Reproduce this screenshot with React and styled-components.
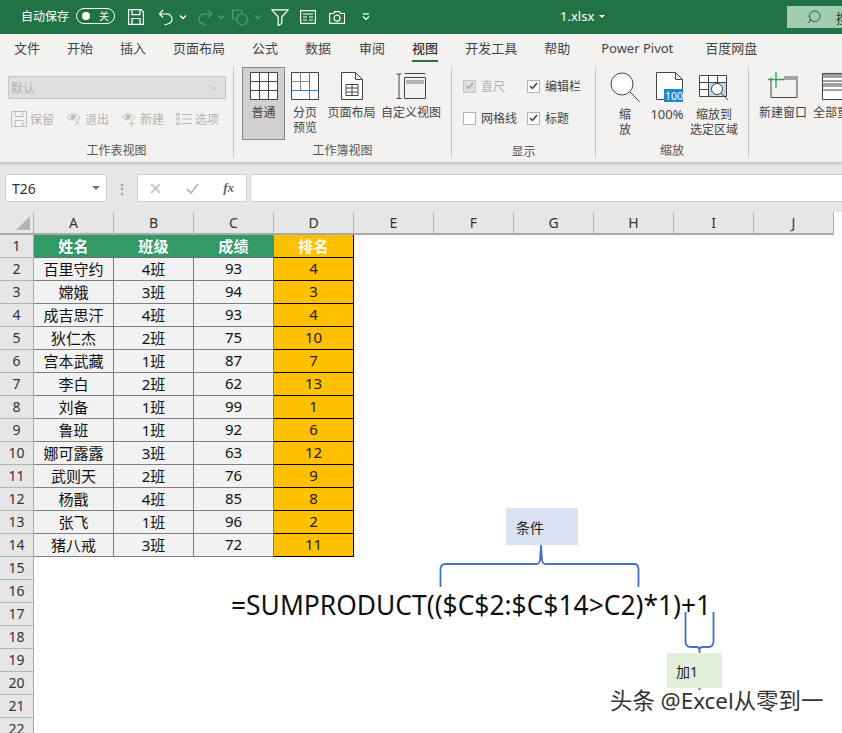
import styled, { createGlobalStyle } from 'styled-components';
import { ChevronDown, Search } from 'lucide-react';

const Global = createGlobalStyle`
  html, body { margin: 0; padding: 0; background: #fff; }
  body { font-family: "Noto Sans", "Noto Sans CJK SC", sans-serif; }
`;

const Page = styled.div`
  position: relative;
  width: 842px;
  height: 733px;
  overflow: hidden;
  background: #fff;
`;

const TitleBar = styled.div`
  height: 34px;
  background: #217346;
  color: #fff;
  display: flex;
  align-items: center;
  padding: 0 0 3px 21px;
  box-sizing: border-box;
  font-size: 12px;
`;

const Toggle = styled.div`
  height: 14px;
  width: 27px;
  border: 1px solid #fff;
  border-radius: 9px;
  margin-left: 7px;
  display: flex;
  align-items: center;
  justify-content: space-between;
  padding: 0 5px;
  box-sizing: content-box;
  font-size: 10px;
  line-height: 14px;
  &::before {
    content: '';
    width: 8px;
    height: 8px;
    border-radius: 50%;
    background: #fff;
  }
`;

const Qat = styled.div`
  display: flex;
  align-items: center;
  align-self: flex-start;
  margin-left: 13px;
  width: 243px;
  height: 34px;
  svg { display: block; flex: none; }
`;

const FileName = styled.div`
  width: 46px;
  margin-left: 189px;
  font-size: 13px;
  display: flex;
  align-items: center;
  gap: 5px;
  white-space: nowrap;
  &::after {
    content: '';
    border: 3px solid transparent;
    border-top: 3px solid #fff;
    margin-top: 4px;
  }
`;

const SearchBox = styled.div`
  margin: 6px 0 0 auto;
  align-self: flex-start;
  width: 55px;
  height: 22px;
  background: #a0ccb4;
  display: flex;
  align-items: center;
  color: #17452c;
  padding-left: 19px;
  box-sizing: border-box;
  gap: 14px;
  font-size: 13px;
  white-space: nowrap;
  overflow: hidden;
  flex: none;
  svg { flex: none; transform: scaleX(-1); }
`;

const Tabs = styled.div`
  height: 28px;
  background: #f3f2f1;
  display: flex;
  padding-left: 14px;
  font-size: 13px;
  color: #444;
`;

const Tab = styled.div`
  margin-right: ${p => p.$gap}px;
  height: 28px;
  line-height: 28px;
  box-sizing: border-box;
  white-space: nowrap;
  font-weight: ${p => (p.$active ? 500 : 400)};
  border-bottom: ${p => (p.$active ? '2px solid #217346' : '0')};
  color: ${p => (p.$active ? '#333' : '#444')};
`;

const Ribbon = styled.div`
  height: 100px;
  background: #f3f2f1;
  display: flex;
  overflow: hidden;
  box-shadow: 0 2px 3px rgba(0, 0, 0, 0.18);
  position: relative;
`;

const Group = styled.div`
  flex: none;
  width: ${p => p.$w}px;
  height: 91px;
  margin-top: 5px;
  border-right: ${p => (p.$last ? '0' : '1px solid #c8c6c4')};
  box-sizing: border-box;
  display: flex;
  flex-direction: column;
`;

const GroupBody = styled.div`
  flex: 1;
  display: flex;
`;

const GroupLabel = styled.div`
  height: 17px;
  line-height: 20px;
  text-align: center;
  font-size: 12px;
  color: #555;
`;

const SheetViews = styled.div`
  padding: 9px 0 0 8px;
`;

const Combo = styled.div`
  width: 218px;
  height: 23px;
  background: #e1dfdd;
  border: 1px solid #c8c6c4;
  box-sizing: border-box;
  display: flex;
  align-items: center;
  justify-content: space-between;
  padding: 0 6px 0 2px;
  font-size: 12px;
  color: #b5b3b1;
`;

const SmallRow = styled.div`
  display: flex;
  margin-top: 10px;
  padding-left: 3px;
  gap: 12px;
`;

const SmallButton = styled.div`
  display: flex;
  align-items: center;
  gap: 3px;
  font-size: 12px;
  height: 20px;
  color: #b5b3b1;
  width: 43px;
  white-space: nowrap;
`;

const BigButton = styled.div`
  flex: none;
  width: ${p => p.$w}px;
  margin-left: ${p => p.$ml || 0}px;
  height: 73px;
  box-sizing: border-box;
  padding-top: 4px;
  display: flex;
  flex-direction: column;
  align-items: center;
  background: ${p => (p.$on ? '#d2d0ce' : 'transparent')};
  border: 1px solid ${p => (p.$on ? '#8a8886' : 'transparent')};
  svg { display: block; flex: none; margin-bottom: 5px; }
`;

const BigLabel = styled.div`
  font-size: ${p => p.$size || 12}px;
  line-height: 15px;
  color: #444;
  text-align: center;
  white-space: nowrap;
`;

const CheckGrid = styled.div`
  display: grid;
  grid-template-columns: 64px 70px;
  grid-auto-rows: 32px;
  padding: 11px 0 0 11px;
`;

const CheckItem = styled.div`
  display: flex;
  align-items: center;
  gap: 5px;
  font-size: 12px;
  color: ${p => (p.$off ? '#b5b3b1' : '#444')};
  white-space: nowrap;
  height: 16px;
`;

const Box = styled.span`
  width: 13px;
  height: 13px;
  border: 1px solid ${p => (p.$off ? '#c8c6c4' : '#b4b2b0')};
  background: ${p => (p.$off ? '#e1dfdd' : '#fff')};
  box-sizing: border-box;
  flex: none;
  display: flex;
  align-items: center;
  justify-content: center;
`;

const FormulaRow = styled.div`
  height: 50px;
  background: #e6e6e6;
  display: flex;
  align-items: flex-start;
  padding: 12px 0 0 5px;
  box-sizing: border-box;
`;

const NameBox = styled.div`
  width: 102px;
  height: 28px;
  background: #fff;
  border: 1px solid #d0d0d0;
  box-sizing: border-box;
  display: flex;
  align-items: center;
  justify-content: space-between;
  padding: 0 6px;
  font-size: 14px;
  color: #333;
  &::after {
    content: '';
    border: 4px solid transparent;
    border-top: 4px solid #777;
    margin-top: 4px;
  }
`;

const Dots = styled.div`
  width: 30px;
  height: 28px;
  display: flex;
  align-items: center;
  justify-content: center;
  color: #999;
  font-size: 12px;
  font-weight: 700;
`;

const FormulaButtons = styled.div`
  width: 110px;
  height: 28px;
  background: #fff;
  border: 1px solid #d0d0d0;
  box-sizing: border-box;
  display: flex;
  align-items: center;
  justify-content: space-between;
  padding: 0 12px;
  margin-right: 3px;
`;

const Fx = styled.span`
  font-family: "Liberation Serif", serif;
  font-style: italic;
  font-weight: 700;
  font-size: 13px;
  color: #666;
`;

const FormulaInput = styled.div`
  flex: 1;
  height: 28px;
  background: #fff;
  border: 1px solid #d0d0d0;
  border-right: 0;
  box-sizing: border-box;
`;

const Sheet = styled.div`
  display: grid;
  grid-template-columns: 34px repeat(10, 80px);
  grid-auto-rows: 23px;
  font-size: 15px;
`;

const Corner = styled.div`
  background: #e6e6e6;
  border-right: 1px solid #b5b5b5;
  border-bottom: 2px solid #a9a9a9;
  box-sizing: border-box;
  position: relative;
  &::after {
    content: '';
    position: absolute;
    right: 3px;
    bottom: 3px;
    border-style: solid;
    border-width: 0 0 14px 14px;
    border-color: transparent transparent #b4b4b4 transparent;
  }
`;

const ColHead = styled.div`
  background: #e6e6e6;
  border-right: 1px solid #b5b5b5;
  border-bottom: 2px solid #a9a9a9;
  box-sizing: border-box;
  display: flex;
  align-items: center;
  justify-content: center;
  font-size: 14px;
  color: #333;
`;

const RowHead = styled.div`
  background: #e6e6e6;
  border-right: 1px solid #a9a9a9;
  border-bottom: 1px solid #b5b5b5;
  box-sizing: border-box;
  display: flex;
  align-items: center;
  justify-content: center;
  font-size: 14px;
  color: #333;
  padding-bottom: 1px;
`;

const Cell = styled.div`
  box-sizing: border-box;
  display: flex;
  align-items: center;
  justify-content: center;
  white-space: nowrap;
  padding-bottom: 2px;
  background: ${p => p.$bg};
  color: ${p => p.$fg};
  font-weight: ${p => (p.$bold ? 700 : 400)};
  border-right: 1px solid ${p => p.$line};
  border-bottom: 1px solid ${p => p.$under || p.$line};
  letter-spacing: ${p => (p.$bold ? '0.3px' : '0')};
`;

const Empty = styled.div`
  background: #fff;
`;

const Note = styled.div`
  position: absolute;
  left: ${p => p.$x}px;
  top: ${p => p.$y}px;
  width: ${p => p.$w}px;
  height: ${p => p.$h}px;
  background: ${p => p.$bg};
  padding-left: ${p => p.$pad}px;
  box-sizing: border-box;
  display: flex;
  align-items: center;
  font-size: 14px;
  color: #222;
`;

const BraceSvg = styled.svg`
  position: absolute;
  left: 0;
  top: 0;
  pointer-events: none;
`;

const FormulaText = styled.div`
  position: absolute;
  left: 231px;
  top: 586px;
  font-size: 26.4px;
  line-height: 38px;
  color: #111;
  white-space: nowrap;
`;

const Watermark = styled.div`
  position: absolute;
  left: 610px;
  top: 686px;
  font-size: 22.4px;
  line-height: 30px;
  color: #333;
  white-space: nowrap;
  text-shadow: 0 0 2px #fff;
`;

const Gap = styled.span`
  flex: none;
  width: ${p => p.$w}px;
`;

const rows = [
  ['百里守约', '4班', 93, 4],
  ['嫦娥', '3班', 94, 3],
  ['成吉思汗', '4班', 93, 4],
  ['狄仁杰', '2班', 75, 10],
  ['宫本武藏', '1班', 87, 7],
  ['李白', '2班', 62, 13],
  ['刘备', '1班', 99, 1],
  ['鲁班', '1班', 92, 6],
  ['娜可露露', '3班', 63, 12],
  ['武则天', '2班', 76, 9],
  ['杨戬', '4班', 85, 8],
  ['张飞', '1班', 96, 2],
  ['猪八戒', '3班', 72, 11],
];

const columns = ['A', 'B', 'C', 'D', 'E', 'F', 'G', 'H', 'I', 'J'];
const tabs = [
  ['文件', 27], ['开始', 27], ['插入', 27], ['页面布局', 27], ['公式', 27], ['数据', 28], ['审阅', 27],
  ['视图', 27, true], ['开发工具', 27], ['帮助', 31], ['Power Pivot', 32], ['百度网盘', 0],
];

const White = ({ w, h, children }) => (
  <svg width={w} height={h} viewBox={`0 0 ${w} ${h}`} fill="none" stroke="#fff" strokeWidth="1.2">
    {children}
  </svg>
);

const Caret = ({ dim }) => (
  <svg width="8" height="6" viewBox="0 0 8 6" fill="none" stroke={dim ? '#5b9a78' : '#fff'} strokeWidth="1.3">
    <path d="M1 1.5l3 3 3-3" />
  </svg>
);

const SmallSave = () => (
  <svg width="16" height="16" viewBox="0 0 16 16" fill="none" stroke="#bdbbb9">
    <path d="M.5.5h15v15H.5zM4 .5v5h8v-5M4 15.5v-6h8v6" />
  </svg>
);

const Eye = ({ plus }) => (
  <svg width="16" height="16" viewBox="0 0 18 16" fill="none" stroke="#bdbbb9">
    <path d="M1 6c4-5 10-5 15 0-2 2-3 3-5 3.500M1 6c2 2 4 3 6 3.500" />
    <circle cx="8" cy="6" r="2.500" fill="#bdbbb9" />
    {plus ? <path d="M12 10v6M9 13h6" /> : <path d="M10 10l5 5M15 10l-5 5" />}
  </svg>
);

const ListIcon = () => (
  <svg width="16" height="14" viewBox="0 0 16 14" fill="none" stroke="#bdbbb9">
    <path d="M.5 1.500h3v2h-3zM.5 6h3v2h-3zM.5 10.500h3v2h-3zM6 2.500h10M6 7h10M6 11.500h10" />
  </svg>
);

const Check = ({ color }) => (
  <svg width="9" height="8" viewBox="0 0 9 8" fill="none" stroke={color} strokeWidth="1.300">
    <path d="M1 4l2.500 2.500L8 1" />
  </svg>
);

function App() {
  return (
    <Page>
      <Global />
      <TitleBar>
        自动保存
        <Toggle>关</Toggle>
        <Qat>
          <White w={16} h={16}><path d="M.6.6h12.500l2.300 2.300v12.500H.6zM4 .6v5h8v-5M4 15.400V9.500h8v5.900" /></White>
          <Gap $w={14} />
          <White w={15} h={17}><path d="M5 1L1.500 5 5 8.500M1.500 5h7a5 5 0 0 1 1 10l-3 1" /></White>
          <Gap $w={6} />
          <Caret />
          <Gap $w={11} />
          <svg width="15" height="17" viewBox="0 0 15 17" fill="none" stroke="#5b9a78" strokeWidth="1.2"><path d="M10 1l3.500 4L10 8.500M13.500 5h-7a5 5 0 0 0-1 10l3 1" /></svg>
          <Gap $w={4} />
          <Caret dim />
          <Gap $w={7} />
          <svg width="17" height="17" viewBox="0 0 17 17" fill="none" stroke="#5b9a78" strokeWidth="1.2"><path d="M.6 1h9v4M.6 1v9h3" /><circle cx="10" cy="10.500" r="5.500" /></svg>
          <Gap $w={5} />
          <Caret dim />
          <Gap $w={9} />
          <White w={18} h={17}><path d="M.8.8h16.400L10.800 8v6.500l-3.600 2V8z" /></White>
          <Gap $w={11} />
          <White w={16} h={14}><path d="M.6.6h14.800v12.800H.6zM3 4h10M3 7h4M9 7h4M3 10h4M9 10h4" /></White>
          <Gap $w={13} />
          <White w={16} h={13}><path d="M.6 2.500h4l1-1.900h5l1 1.900h4v9.900H.6z" /><circle cx="8" cy="7.200" r="3" /></White>
          <Gap $w={17} />
          <White w={8} h={8}><path d="M1 .8h6M1 3.500l3 3 3-3" /></White>
        </Qat>
        <FileName>1.xlsx</FileName>
        <SearchBox>
          <Search size={16} strokeWidth={1.3} />
          搜
        </SearchBox>
      </TitleBar>
      <Tabs>
        {tabs.map(([t, gap, active]) => (
          <Tab key={t} $gap={gap} $active={active}>{t}</Tab>
        ))}
      </Tabs>
      <Ribbon>
        <Group $w={234}>
          <GroupBody>
            <SheetViews>
              <Combo>默认<ChevronDown size={10} /></Combo>
              <SmallRow>
                <SmallButton><SmallSave />保留</SmallButton>
                <SmallButton><Eye />退出</SmallButton>
                <SmallButton><Eye plus />新建</SmallButton>
                <SmallButton><ListIcon />选项</SmallButton>
              </SmallRow>
            </SheetViews>
          </GroupBody>
          <GroupLabel>工作表视图</GroupLabel>
        </Group>
        <Group $w={218}>
          <GroupBody>
            <BigButton $w={43} $ml={8} $on>
              <svg width="28" height="28" viewBox="0 0 28 28" fill="#fff" stroke="#444">
                <path d="M.5.500h27v27H.5zM9.500.500v27M18.500.500v27M.5 9.500h27M.5 18.500h27" />
              </svg>
              <BigLabel>普通</BigLabel>
            </BigButton>
            <BigButton $w={40}>
              <svg width="28" height="28" viewBox="0 0 28 28" fill="#fff" stroke="#444">
                <path d="M.5.500h27v27H.5z" />
                <path d="M9.500.500v18M.5 9.500h18" fill="none" stroke="#888" />
                <path d="M18.500.500v27M.5 18.500h27" fill="none" stroke="#1e88d0" />
              </svg>
              <BigLabel>分页<br />预览</BigLabel>
            </BigButton>
            <BigButton $w={47} $ml={3}>
              <svg width="22" height="28" viewBox="0 0 22 28" fill="#fff" stroke="#444">
                <path d="M.5.500h14l7 7v20H.5zM14.500.500v7h7M5 12.500h12v11H5zM5 16h12M5 20h12M11 12.500v11" />
              </svg>
              <BigLabel>页面布局</BigLabel>
            </BigButton>
            <BigButton $w={60} $ml={6}>
              <svg width="30" height="28" viewBox="0 0 30 28" fill="none" stroke="#444">
                <path d="M.5 2h5M3 2v24M.5 26.500h5M8.500 5.500h21v21h-21z" />
                <path d="M10 8h18v4H10z" fill="#b5b3b1" stroke="none" />
                <path d="M8.500 1.500h21" />
              </svg>
              <BigLabel>自定义视图</BigLabel>
            </BigButton>
          </GroupBody>
          <GroupLabel>工作簿视图</GroupLabel>
        </Group>
        <Group $w={144}>
          <GroupBody>
            <CheckGrid>
              <CheckItem $off><Box $off><Check color="#a5a3a1" /></Box>直尺</CheckItem>
              <CheckItem><Box><Check color="#333" /></Box>编辑栏</CheckItem>
              <CheckItem><Box />网格线</CheckItem>
              <CheckItem><Box><Check color="#333" /></Box>标题</CheckItem>
            </CheckGrid>
          </GroupBody>
          <GroupLabel>显示</GroupLabel>
        </Group>
        <Group $w={153}>
          <GroupBody>
            <BigButton $w={30} $ml={14}>
              <svg width="30" height="30" viewBox="0 0 30 30" fill="#fff" stroke="#444">
                <circle cx="12" cy="12" r="11" />
                <path d="M20 20l9.500 9.500" />
              </svg>
              <BigLabel>缩<br />放</BigLabel>
            </BigButton>
            <BigButton $w={54}>
              <svg width="34" height="30" viewBox="0 0 34 30" fill="#fff" stroke="#444">
                <path d="M6.500.500h19l7 7v20h-26zM25.500.500v7h7" />
                <path d="M14 17h19v13H14z" fill="#1e88d0" stroke="none" />
                <text x="15" y="27.500" fontSize="10.500" fill="#fff" stroke="none" fontFamily="Noto Sans">100</text>
              </svg>
              <BigLabel $size={13}>100%</BigLabel>
            </BigButton>
            <BigButton $w={50} $ml={-5}>
              <svg width="30" height="30" viewBox="0 0 30 30" fill="#fff" stroke="#444">
                <path d="M.5 3.500h27v21H.5zM.5 10.500h27M.5 17.500h9M9.500 3.500v21M18.500 3.500v7" />
                <path d="M10 11h17v13H10z" fill="#bcd9ee" stroke="none" />
                <circle cx="18" cy="17" r="5.500" fill="#fff" />
                <path d="M22 21l7 7" />
              </svg>
              <BigLabel>缩放到<br />选定区域</BigLabel>
            </BigButton>
          </GroupBody>
          <GroupLabel>缩放</GroupLabel>
        </Group>
        <Group $w={94} $last>
          <GroupBody>
            <BigButton $w={68}>
              <svg width="30" height="28" viewBox="0 0 30 28" fill="none" stroke="#444">
                <path d="M3 5.500v20h26v-21" />
                <path d="M16 4h13v4H16z" fill="#a5a3a1" stroke="none" />
                <path d="M8 0v16M0 7.500h16" stroke="#2e9e5c" strokeWidth="1.300" />
              </svg>
              <BigLabel>新建窗口</BigLabel>
            </BigButton>
            <BigButton $w={58} $ml={-9}>
              <svg width="30" height="28" viewBox="0 0 30 28" fill="#fff" stroke="#444">
                <path d="M.5 1.500h29v26H.5zM.5 9h29M.5 18h29" />
                <path d="M1 2h28v4H1zM1 11h28v4H1z" fill="#a5a3a1" stroke="none" />
              </svg>
              <BigLabel>全部重排</BigLabel>
            </BigButton>
          </GroupBody>
          <GroupLabel />
        </Group>
      </Ribbon>
      <FormulaRow>
        <NameBox>T26</NameBox>
        <Dots>⋮</Dots>
        <FormulaButtons>
          <svg width="11" height="11" viewBox="0 0 11 11" stroke="#bbb" strokeWidth="1.500"><path d="M1 1l9 9M10 1l-9 9" /></svg>
          <svg width="13" height="11" viewBox="0 0 13 11" fill="none" stroke="#bbb" strokeWidth="2"><path d="M1 6l4 4 7-9" /></svg>
          <Fx>fx</Fx>
        </FormulaButtons>
        <FormulaInput />
      </FormulaRow>
      <Sheet>
        <Corner />
        {columns.map(c => <ColHead key={c}>{c}</ColHead>)}
        <RowHead>1</RowHead>
        {['姓名', '班级', '成绩'].map(t => (
          <Cell key={t} $bg="#339966" $fg="#fff" $line="#339966" $under="#6f6f6f" $bold>{t}</Cell>
        ))}
        <Cell $bg="#ffc000" $fg="#fff" $line="#000" $bold>排名</Cell>
        {Array.from({ length: 6 }, (_, i) => <Empty key={i} />)}
        {rows.map((r, i) => [
          <RowHead key={`h${i}`}>{i + 2}</RowHead>,
          ...r.slice(0, 3).map((v, j) => (
            <Cell key={`${i}-${j}`} $bg="#f2f2f2" $fg="#111" $line="#7f7f7f">{v}</Cell>
          )),
          <Cell key={`${i}-d`} $bg="#ffc000" $fg="#222" $line="#000">{r[3]}</Cell>,
          ...Array.from({ length: 6 }, (_, k) => <Empty key={`${i}e${k}`} />),
        ])}
        {[15, 16, 17, 18, 19, 20, 21, 22].map(n => [
          <RowHead key={n}>{n}</RowHead>,
          ...Array.from({ length: 10 }, (_, k) => <Empty key={`${n}e${k}`} />),
        ])}
      </Sheet>
      <Note $x={506} $y={508} $w={72} $h={37} $bg="#dae3f3" $pad={10}>条件</Note>
      <BraceSvg width="842" height="733" viewBox="0 0 842 733" fill="none" stroke="#4472c4" strokeWidth="1.800">
        <path d="M440.500 587v-17q0-6 5-6h91q3 0 3.500-4l1-15 1 15q.5 4 3.500 4h89q4 0 4 6v17" />
        <path d="M685.500 612v29q0 6 5 6h6q3 0 3 3v3M713.500 612v29q0 6-5 6h-6q-3 0-3 3v3" />
        <path d="M699.500 688v2" />
      </BraceSvg>
      <Note $x={667} $y={653} $w={55} $h={35} $bg="#e2efda" $pad={9}>加1</Note>
      <FormulaText>=SUMPRODUCT(($C$2:$C$14&gt;C2)*1)+1</FormulaText>
      <Watermark>头条 @Excel从零到一</Watermark>
    </Page>
  );
}

export default App;
